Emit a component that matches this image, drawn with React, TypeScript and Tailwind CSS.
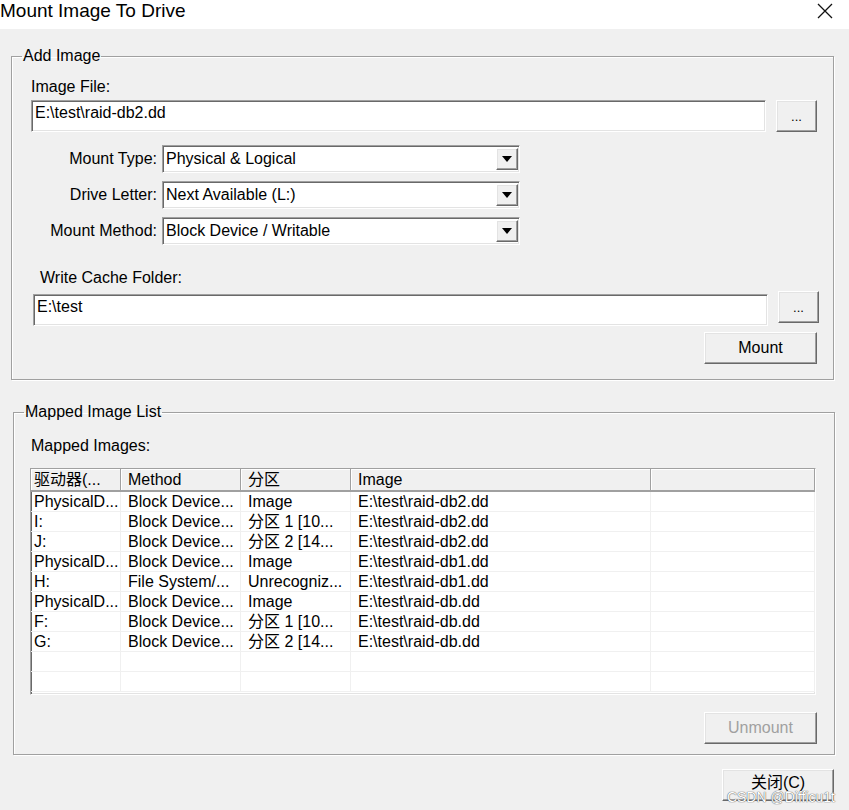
import React from 'react';

const FONT = { fontFamily: '"Liberation Sans", "Noto Sans CJK SC", Arial, sans-serif' };

const sunken =
  'border border-t-[#a0a0a0] border-l-[#a0a0a0] border-b-white border-r-white shadow-[inset_1px_1px_0_#696969,inset_-1px_-1px_0_#e3e3e3]';
const raised =
  'border border-t-white border-l-white border-b-[#696969] border-r-[#696969] shadow-[inset_-1px_-1px_0_#a0a0a0,inset_1px_1px_0_#e3e3e3] bg-[#f0f0f0]';

interface BtnProps {
  className?: string;
  disabled?: boolean;
  children: React.ReactNode;
}

const WinButton: React.FC<BtnProps> = ({ className = '', disabled, children }) => (
  <div
    className={`${raised} flex items-center justify-center leading-none ${
      disabled ? 'text-[#a0a0a0]' : 'text-black'
    } ${className}`}
  >
    {children}
  </div>
);

const Select: React.FC<{ value: string }> = ({ value }) => (
  <div className={`${sunken} bg-white w-[358px] h-[28px] flex items-center`}>
    <span className="flex-1 pl-[3px] leading-none">{value}</span>
    <div className={`${raised} w-[22px] h-[22px] mr-[1px] flex items-center justify-center`}>
      <svg width="10" height="6" viewBox="0 0 10 6">
        <path d="M0 0 H10 L5 6 Z" fill="#000" />
      </svg>
    </div>
  </div>
);

const groupBorder =
  'border border-[#a0a0a0] shadow-[inset_1px_1px_0_#fff,1px_1px_0_#fff]';

const rows: string[][] = [
  ['PhysicalD...', 'Block Device...', 'Image', 'E:\\test\\raid-db2.dd'],
  ['I:', 'Block Device...', '分区 1 [10...', 'E:\\test\\raid-db2.dd'],
  ['J:', 'Block Device...', '分区 2 [14...', 'E:\\test\\raid-db2.dd'],
  ['PhysicalD...', 'Block Device...', 'Image', 'E:\\test\\raid-db1.dd'],
  ['H:', 'File System/...', 'Unrecogniz...', 'E:\\test\\raid-db1.dd'],
  ['PhysicalD...', 'Block Device...', 'Image', 'E:\\test\\raid-db.dd'],
  ['F:', 'Block Device...', '分区 1 [10...', 'E:\\test\\raid-db.dd'],
  ['G:', 'Block Device...', '分区 2 [14...', 'E:\\test\\raid-db.dd'],
  ['', '', '', ''],
  ['', '', '', ''],
];

const colWidths = ['w-[90px] pl-[3px]', 'w-[120px] pl-[7px]', 'w-[110px] pl-[7px]', 'w-[300px] pl-[7px]', 'flex-1'];
const headers = ['驱动器(...', 'Method', '分区', 'Image', ''];

const MappedTable: React.FC = () => (
  <div className={`${sunken} bg-white w-[786px] h-[227px] ml-[16px] mt-[13px] overflow-hidden`}>
    <div className="flex h-[23px] bg-[#f0f0f0] border-b-2 border-b-[#a0a0a0]">
      {headers.map((h, i) => (
        <div
          key={i}
          className={`${colWidths[i]} h-full flex items-center border-r border-r-[#a0a0a0] shadow-[inset_1px_1px_0_#fff] leading-none`}
        >
          {h}
        </div>
      ))}
    </div>
    {rows.map((r, ri) => (
      <div key={ri} className="flex h-[20px]">
        {[...r, ''].map((c, ci) => (
          <div
            key={ci}
            className={`${colWidths[ci]} h-full flex items-center border-r border-b border-[#f0f0f0] leading-none whitespace-nowrap`}
          >
            {c}
          </div>
        ))}
      </div>
    ))}
  </div>
);

export default function App() {
  return (
    <div
      className="relative w-[849px] h-[810px] bg-[#f0f0f0] overflow-hidden text-[16px] text-black"
      style={FONT}
    >
      {/* title bar */}
      <div className="h-[29px] bg-white flex items-start justify-between">
        <span className="text-[19px] leading-[22px]">Mount Image To Drive</span>
        <svg width="16" height="16" viewBox="0 0 16 16" className="mt-[3px] mr-[16px]">
          <path d="M1 1 L15 15 M15 1 L1 15" stroke="#111" strokeWidth="1.3" />
        </svg>
      </div>

      {/* Add Image group */}
      <fieldset className={`${groupBorder} mt-[18px] ml-[11px] w-[823px] pb-[15px]`}>
        <legend className="ml-[10px] px-[1px] leading-[18px] text-[16px]">Add Image</legend>

        <div className="ml-[19px] mt-[13px] leading-[18px]">Image File:</div>
        <div className="ml-[19px] mt-[4px] flex">
          <div className={`${sunken} bg-white w-[735px] h-[32px] pt-[3px] pl-[3px] leading-[18px]`}>
            {'E:\\test\\raid-db2.dd'}
          </div>
          <WinButton className="ml-[10px] w-[41px] h-[32px] text-[13px]">...</WinButton>
        </div>

        <div className="mt-[13px] flex flex-col gap-[8px]">
          {[
            ['Mount Type:', 'Physical & Logical'],
            ['Drive Letter:', 'Next Available (L:)'],
            ['Mount Method:', 'Block Device / Writable'],
          ].map(([label, value]) => (
            <div key={label} className="flex items-center">
              <span className="w-[146px] text-right pr-[1px]">{label}</span>
              <span className="ml-[4px]">
                <Select value={value} />
              </span>
            </div>
          ))}
        </div>

        <div className="ml-[28px] mt-[24px] leading-[18px]">Write Cache Folder:</div>
        <div className="ml-[21px] mt-[4px] flex items-start">
          <div className={`${sunken} bg-white w-[735px] h-[32px] mt-[3px] pt-[3px] pl-[3px] leading-[18px]`}>
            {'E:\\test'}
          </div>
          <WinButton className="ml-[10px] w-[41px] h-[32px] text-[13px]">...</WinButton>
        </div>
        <WinButton className="mt-[6px] ml-[692px] w-[113px] h-[32px]">Mount</WinButton>
      </fieldset>

      {/* Mapped Image List group */}
      <fieldset className={`${groupBorder} mt-[23px] ml-[13px] w-[822px] pb-[10px]`}>
        <legend className="ml-[10px] px-[1px] leading-[18px] text-[16px]">Mapped Image List</legend>
        <div className="ml-[17px] mt-[16px] leading-[18px]">Mapped Images:</div>
        <MappedTable />
        <WinButton disabled className="mt-[17px] ml-[690px] w-[113px] h-[32px]">
          Unmount
        </WinButton>
      </fieldset>

      <WinButton className="mt-[14px] ml-[722px] w-[112px] h-[32px] pb-[4px]">关闭(C)</WinButton>

      {/* watermark */}
      <div className="absolute right-[14px] bottom-[6px] text-[14px] leading-none text-white [text-shadow:0_0_1px_#555,0_0_1px_#555]">
        CSDN @Difficu1t
      </div>
    </div>
  );
}
